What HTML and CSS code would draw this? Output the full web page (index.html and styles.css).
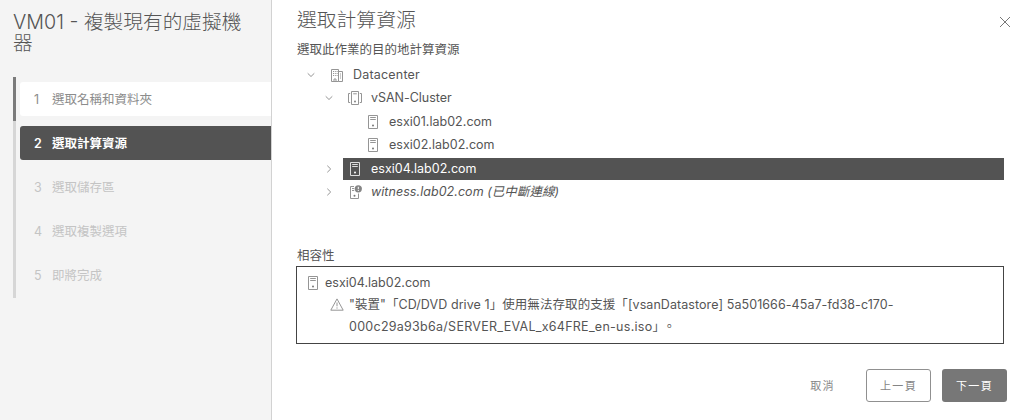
FILE: index.html
```
<!DOCTYPE html>
<html lang="zh-TW">
<head>
<meta charset="utf-8">
<title>VM01 - 複製現有的虛擬機器</title>
<link rel="stylesheet" href="styles.css">
</head>
<body>
<svg class="defs" width="0" height="0" aria-hidden="true">
  <symbol id="host" viewBox="0 0 10 14"><path d="M.5.5h9v13h-9zM2.2 2.5h5.6M2.2 4.5h5.6" /><circle class="dot" cx="5" cy="10.5" r="1" /></symbol>
  <symbol id="down" viewBox="0 0 10 10"><path d="M1.7 3.3 5 6.5l3.3-3.2" /></symbol>
  <symbol id="right" viewBox="0 0 10 10"><path d="M3.3 1.7 6.7 5 3.3 8.3" /></symbol>
</svg>
<div class="wizard">
  <aside class="sidebar">
    <h1 class="wizard-title">VM01 - 複製現有的虛擬機器</h1>
    <ol class="steps">
      <li class="step done"><span class="num">1</span>選取名稱和資料夾</li>
      <li class="step current"><span class="num">2</span>選取計算資源</li>
      <li class="step"><span class="num">3</span>選取儲存區</li>
      <li class="step"><span class="num">4</span>選取複製選項</li>
      <li class="step"><span class="num">5</span>即將完成</li>
    </ol>
  </aside>
  <main class="content">
    <header class="header">
      <h2 class="page-title">選取計算資源</h2>
      <svg class="close" viewBox="0 0 12 12"><path d="m1 1 10 10M11 1 1 11" /></svg>
    </header>
    <p class="label">選取此作業的目的地計算資源</p>
    <ul class="tree">
      <li class="row l1"><svg class="caret"><use href="#down" /></svg>
        <span class="node"><svg class="icon" viewBox="0 0 14 14"><path d="M1.5 1.5h7v12h-7zM8.5 3.5h4v10h-4M4 13v-2h2v2" /><path class="dots" d="M3 3.5h4.6M3 5.5h4.6M3 7.5h4.6M10 6h1.5M10 8h1.5M10 10h1.5" /></svg><span class="name n-dc">Datacenter</span></span></li>
      <li class="row l2"><svg class="caret"><use href="#down" /></svg>
        <span class="node"><svg class="icon" viewBox="0 0 14 14"><path d="M3.5.5h7v13h-7zM5.2 2.8h3.6M2.2 2.5H.5v9h1.7M11.8 2.5h1.7v9h-1.7" /><circle class="dot" cx="7" cy="10.5" r=".9" /></svg><span class="name n-cl">vSAN-Cluster</span></span></li>
      <li class="row l3"><span class="caret"></span>
        <span class="node"><svg class="icon"><use href="#host" /></svg><span class="name n-host">esxi01.lab02.com</span></span></li>
      <li class="row l3"><span class="caret"></span>
        <span class="node"><svg class="icon"><use href="#host" /></svg><span class="name n-host">esxi02.lab02.com</span></span></li>
      <li class="row l2"><svg class="caret"><use href="#right" /></svg>
        <span class="node selected"><svg class="icon"><use href="#host" /></svg><span class="name n-host">esxi04.lab02.com</span></span></li>
      <li class="row l2"><svg class="caret"><use href="#right" /></svg>
        <span class="node"><svg class="icon" viewBox="0 0 14 14"><path d="M6 1.5H2.5v12h8V8.5M4 3.5h2.2M4 5.5h2.2" /><circle class="dot" cx="6.5" cy="10.8" r="1" /><circle class="badge" cx="10.3" cy="3.8" r="3.6" /><path class="bang" d="M10.3 1.8v2.4M10.3 5v1" /></svg><span class="name off">witness.lab02.com (已中斷連線)</span></span></li>
    </ul>
    <p class="label compat-label">相容性</p>
    <section class="compat">
      <div class="compat-host"><svg class="icon"><use href="#host" /></svg><span class="name n-host">esxi04.lab02.com</span></div>
      <div class="warning">
        <svg class="warn" viewBox="0 0 14 13"><path d="M7 .9 13.2 12.2H.8zM7 4.5v3.8M7 9.4v1.2" /></svg>
        <p class="message"><span class="msg1">"裝置"「CD/DVD drive 1」使用無法存取的支援「[vsanDatastore] 5a501666-45a7-fd38-c170-</span><br><span class="msg2">000c29a93b6a/SERVER_EVAL_x64FRE_en-us.iso」</span><span class="stop">。</span></p>
      </div>
    </section>
    <footer class="footer">
      <button class="btn link">取消</button>
      <button class="btn outline">上一頁</button>
      <button class="btn primary">下一頁</button>
    </footer>
  </main>
</div>
</body>
</html>
```
FILE: styles.css
```
* { box-sizing: border-box; }
body {
  margin: 0;
  color: #555;
  background: #fff;
  font: 12.5px/20px Inter, "Noto Sans CJK TC", sans-serif;
}
h1, h2, p, ul, ol { margin: 0; padding: 0; list-style: none; }
svg { fill: none; stroke: #959595; stroke-width: 1; flex: none; }
.defs { position: absolute; }
.dot { fill: currentColor; stroke: none; }
.wizard { display: flex; height: 420px; }

.sidebar {
  width: 272px;
  padding: 12px 0 0 13px;
  background: #f4f4f4;
  border-right: 1px solid #d2d2d2;
}
.wizard-title {
  width: 235px;
  height: 65px;
  font-size: 19.7px;
  font-weight: 300;
  line-height: 21px;
  word-break: break-all;
}
.steps {
  display: flex;
  flex-direction: column;
  gap: 10px;
  height: 221px;
  padding: 5px 0 0 7px;
  background: linear-gradient(#7b7b7b 44px, #d6d6d6 44px) no-repeat 0 0 / 3px 100%;
}
.step {
  display: flex;
  align-items: center;
  height: 34px;
  flex: none;
  padding: 2px 0 0 14px;
  border-radius: 3px 0 0 3px;
  color: #c4c4c4;
}
.num { width: 18px; }
.done { background: #fff; color: #8c8c8c; }
.current { background: #535353; color: #fff; font-weight: 600; }

.content { flex: 1; padding: 10px 20px 0 24px; }
.header { display: flex; justify-content: space-between; padding-left: 1px; }
.page-title { font-size: 19.8px; font-weight: 300; line-height: 21px; }
.close { width: 12px; height: 12px; margin: 6px -7px 0 0; stroke: #777; }
.label { height: 20px; padding-left: 1px; }
.header + .label { margin-top: 9px; }

.tree { margin-top: 3px; }
.row { display: flex; align-items: center; height: 23.5px; }
.l1 { padding-left: 10px; }
.l2 { padding-left: 28px; }
.l3 { padding-left: 46px; }
.caret { width: 10px; height: 10px; margin-right: 9px; }
.node { display: flex; flex: 1; align-items: center; height: 22.5px; padding-left: 5px; gap: 9px; }
.icon { width: 14px; height: 14px; color: #777; }
.dots { stroke-dasharray: 1 .8; }
.badge { fill: #858585; stroke: none; }
.bang { stroke: #fff; }
.name { white-space: nowrap; }
.n-dc { letter-spacing: .2px; }
.n-cl { letter-spacing: -.03px; }
.n-host { letter-spacing: .02px; }
.selected { background: #535353; color: #fff; }
.selected .icon { color: #fff; stroke: #ddd; }
.off { font-style: italic; letter-spacing: .05px; }

.compat-label { margin-top: 42px; }
.compat { height: 78px; padding: 5px 9px; border: 1px solid #444; }
.compat-host { display: flex; align-items: center; height: 22px; gap: 5px; }
.warning { display: flex; gap: 5px; padding-left: 24px; }
.warn { width: 14px; height: 13px; margin-top: 4px; }
.message { line-height: 22px; white-space: nowrap; }
.msg1 { letter-spacing: .07px; }
.msg2 { letter-spacing: .27px; }
.stop { margin-left: 4px; }

.footer { display: flex; justify-content: flex-end; gap: 11px; margin: 25px -3px 0 0; }
.btn {
  width: 65px;
  height: 33px;
  padding: 0;
  border: 1px solid transparent;
  border-radius: 3px;
  background: none;
  color: #858585;
  font: 11px/20px Inter, "Noto Sans CJK TC", sans-serif;
  letter-spacing: 1.3px;
}
.outline { border-color: #909090; }
.primary { background: #777; color: #fff; }
```
